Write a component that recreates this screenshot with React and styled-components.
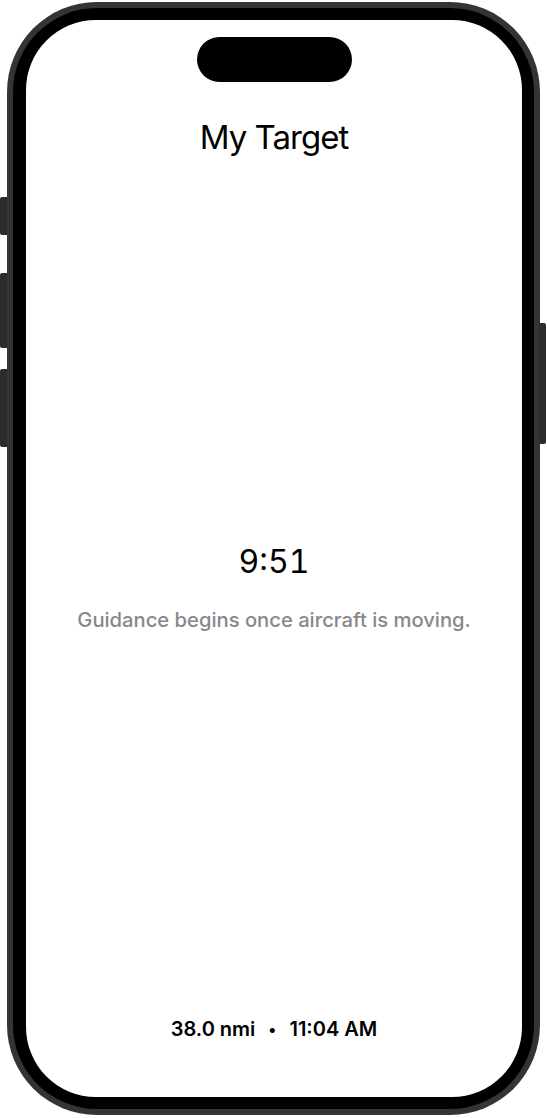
import React from "react";
import styled, { createGlobalStyle } from "styled-components";

const GlobalStyle = createGlobalStyle`
  html, body {
    margin: 0;
    padding: 0;
    background: #ffffff;
  }
  body {
    font-family: Inter, "Noto Sans", "Liberation Sans", sans-serif;
    -webkit-font-smoothing: antialiased;
  }
`;

const Page = styled.div`
  width: 547px;
  height: 1118px;
  padding: 2px 0 0 7px;
  box-sizing: border-box;
`;

const Device = styled.div`
  position: relative;
  width: 533px;
  height: 1113px;
  box-sizing: border-box;
  padding: 6px;
  border-radius: 90px;
  background: #343434;
`;

const SideButton = styled.div`
  position: absolute;
  top: ${(p) => p.top}px;
  height: ${(p) => p.h}px;
  width: 7px;
  background: #2c2c2c;
  ${(p) => (p.right ? "right: -6px; border-radius: 0 2px 2px 0;" : "left: -7px; border-radius: 2px 0 0 2px;")}
`;

const Bezel = styled.div`
  height: 100%;
  box-sizing: border-box;
  padding: 12px 12px 12px 13px;
  border-radius: 84px;
  background: #000000;
`;

const Screen = styled.div`
  height: 100%;
  display: flex;
  flex-direction: column;
  align-items: center;
  border-radius: 70px;
  background: #ffffff;
  overflow: hidden;
`;

const Island = styled.div`
  margin-top: 17px;
  width: 155px;
  height: 45px;
  border-radius: 23px;
  background: #000000;
  margin-left: 1px;
`;

const Title = styled.h1`
  margin: 35px 0 0;
  font-size: 33px;
  line-height: 40px;
  font-weight: 400;
  color: #000000;
  letter-spacing: -1px;
`;

const Middle = styled.div`
  flex: 1;
  display: flex;
  flex-direction: column;
  align-items: center;
  justify-content: center;
`;

const Clock = styled.div`
  font-size: 32px;
  line-height: 38px;
  font-weight: 400;
  color: #000000;
  font-variant-numeric: tabular-nums;
`;

const Hint = styled.div`
  margin-top: 27px;
  font-size: 20.2px;
  line-height: 24px;
  font-weight: 500;
  color: #88888c;
`;

const Footer = styled.div`
  margin-bottom: 56px;
  font-size: 20px;
  line-height: 24px;
  font-weight: 600;
  color: #000000;
  display: flex;
  align-items: center;
  gap: 13px;
`;

const Dot = styled.span`
  font-size: 16px;
`;

export default function App() {
  return (
    <>
      <GlobalStyle />
      <Page>
        <Device>
          <SideButton top={195} h={38} />
          <SideButton top={271} h={75} />
          <SideButton top={367} h={78} />
          <SideButton right top={321} h={121} />
          <Bezel>
            <Screen>
              <Island />
              <Title>My Target</Title>
              <Middle>
                <Clock>9:51</Clock>
                <Hint>Guidance begins once aircraft is moving.</Hint>
              </Middle>
              <Footer>
                <span>38.0 nmi</span>
                <Dot>•</Dot>
                <span>11:04 AM</span>
              </Footer>
            </Screen>
          </Bezel>
        </Device>
      </Page>
    </>
  );
}
